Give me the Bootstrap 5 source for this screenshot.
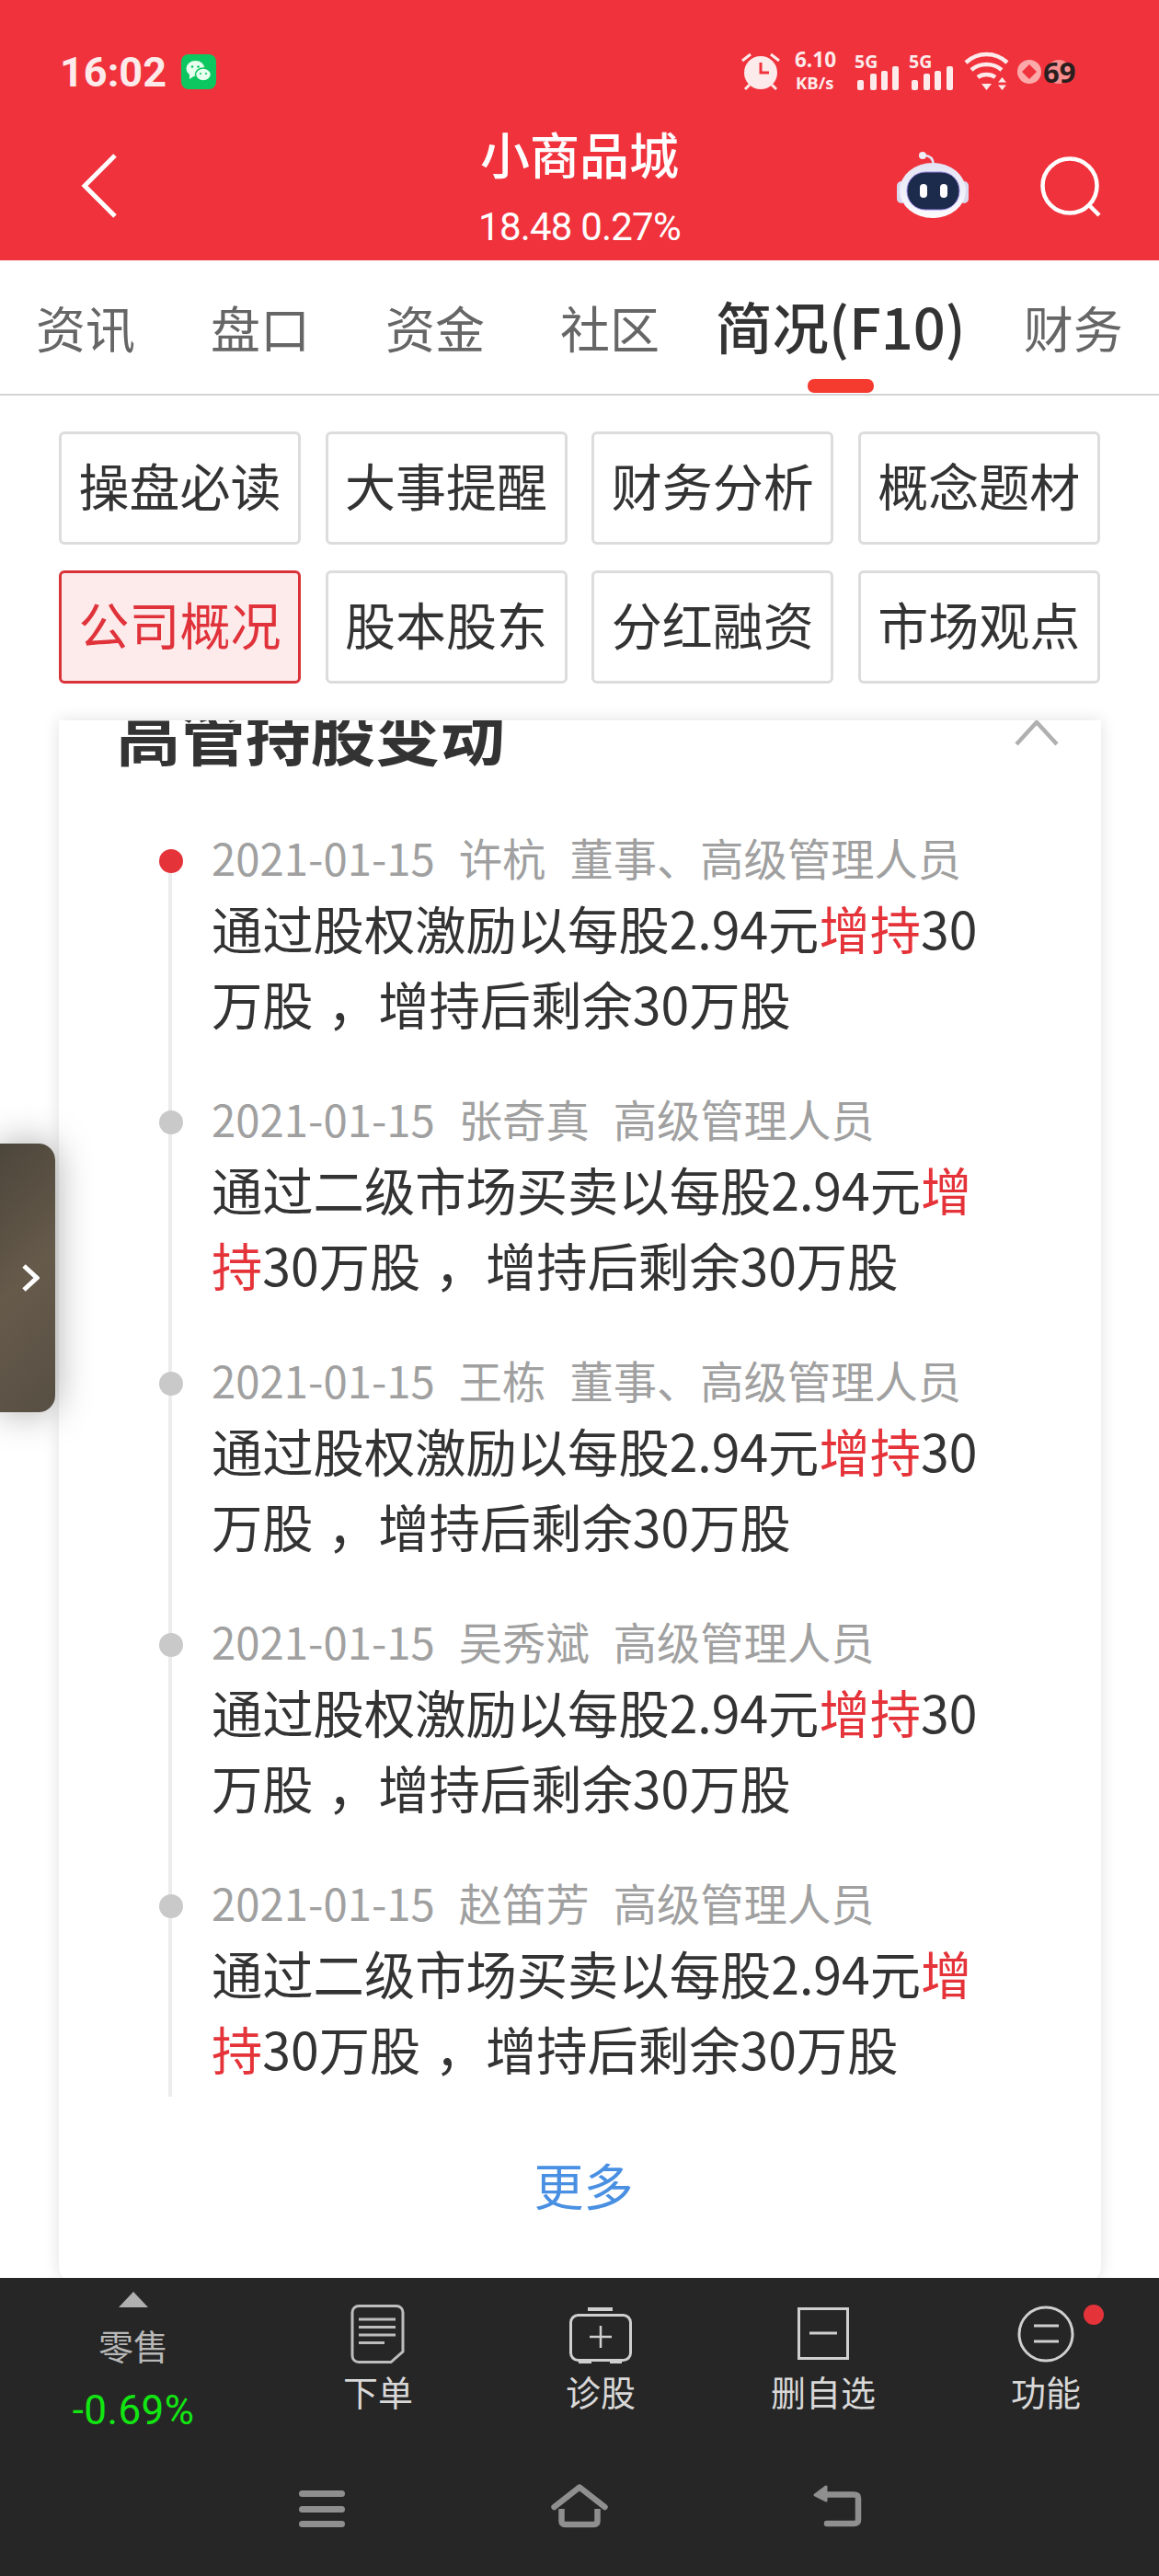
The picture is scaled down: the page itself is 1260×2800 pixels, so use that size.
<!DOCTYPE html>
<html lang="zh">
<head>
  <meta charset="UTF-8">
  <meta name="viewport" content="width=device-width, initial-scale=1.0">
  <title>小商品城</title>
  <link href="https://cdn.jsdelivr.net/npm/bootstrap@5.3.2/dist/css/bootstrap.min.css" rel="stylesheet">
  <style>
    body {
      font-family: "Noto Sans CJK SC", "Noto Sans", sans-serif;
      background: #fff;
      color: #333;
      overflow: hidden;
    }
    .phone { width: 1260px; height: 2800px; position: relative; overflow: hidden; }

    /* red header */
    .top-red { background: #f0323c; height: 283px; color: #fff; flex: none; position: relative; }
    .stat-bar { height: 124px; padding: 32px 80px 0 65px; }
    .clock-txt { font-family: Roboto, sans-serif; font-size: 45px; font-weight: 700; line-height: 1; color: #fdeaea; }
    .wx-badge { width: 38px; height: 38px; border-radius: 8px; background: #0cc760; margin-left: 16px; }
    .title-bar { height: 159px; padding: 0 63px 0 88px; }
    .title-mid { position: absolute; left: 0; right: 0; top: 124px; text-align: center; }
    .title-name { font-size: 54px; font-weight: 500; line-height: 78px; margin-top: 4px; }
    .title-price { font-family: Roboto, sans-serif; font-size: 42px; letter-spacing: -.8px; line-height: 50px; margin-top: 16px; }
    .back-ico { margin-top: 43px; }
    .robot-ico { margin-top: 41px; margin-right: 78px; }
    .find-ico { margin-top: 46px; }

    /* tabs */
    .tab-row { height: 147px; border-bottom: 2px solid #d4d4d4; padding: 0 0 0 39px; gap: 82px; position: relative; flex: none; }
    .tab-one { font-size: 54px; color: #666; line-height: 1; padding-top: 46px; white-space: nowrap; }
    .tab-on { font-size: 61.5px; color: #333; font-weight: 500; padding-top: 40px; margin-left: -21px; }
    .tab-end { margin-left: -19px; }
    .tab-mark { position: absolute; left: 878px; bottom: 1px; width: 72px; height: 15px; border-radius: 7px; background: #f53a30; }

    /* sub buttons */
    .btn-zone { padding: 39px 0 0 64px; display: grid; grid-template-columns: repeat(4, 263px); column-gap: 26.6px; row-gap: 28px; align-content: start; height: 353px; flex: none; background: #fff; }
    .sub-btn { height: 123px; border: 3px solid #dcdcdc; border-radius: 6px; font-size: 55px; color: #333; display: flex; align-items: center; justify-content: center; background: #fff; line-height: 1; padding-bottom: 9px; }
    .sub-on { background: #fdeaea; border-color: #d9333a; color: #e0323a; }

    /* card, scrolled under the buttons */
    .main-card { position: absolute; top: 783px; left: 64px; width: 1133px; height: 1697px; background: #fff; border-radius: 0 0 16px 16px; box-shadow: 0 0 18px rgba(0,0,0,.12); overflow: hidden; }
    .card-head { position: absolute; left: 62px; top: -22px; font-size: 70.5px; font-weight: 700; color: #333; line-height: 1; white-space: nowrap; }
    .card-fold { position: absolute; left: 1038px; top: 0; }
    .trade-list { position: absolute; left: 0; top: 121px; width: 100%; }
    .trade-item { position: relative; height: 284px; padding-left: 166px; }
    .trade-item::before { content: ""; position: absolute; left: 119px; top: 0; bottom: 0; width: 4px; background: #ececec; }
    .trade-item:first-child::before { top: 32px; }
    .trade-item:last-child::before { bottom: 45px; }
    .trade-dot { position: absolute; left: 109px; top: 19px; width: 26px; height: 26px; border-radius: 50%; background: #c9c9c9; }
    .trade-first { background: #e5333a; }
    .trade-meta { font-size: 47.3px; color: #a0a0a0; line-height: 56px; white-space: nowrap; }
    .trade-meta span + span { margin-left: 26px; }
    .trade-text { font-size: 55.3px; line-height: 82px; word-spacing: 3px; color: #333; width: 870px; margin-top: 7px; }
    .trade-text em { font-style: normal; color: #e5333a; }
    .more-link { position: absolute; top: 1565px; left: 0; width: 100%; padding-left: 8px; text-align: center; color: #4a90e2; font-size: 54px; line-height: 1; }

    .side-tab { position: absolute; left: 0; top: 1243px; width: 60px; height: 292px; padding-right: 17px; border-radius: 0 18px 18px 0; background: linear-gradient(135deg, #4c463a, #665a4b 50%, #574f43); box-shadow: 0 0 40px rgba(0,0,0,.35); z-index: 3; }

    /* dark bottom */
    .dark-bar { position: absolute; left: 0; top: 2476px; width: 100%; height: 324px; background: #262626; z-index: 4; }
    .dock-row { height: 224px; }
    .dock-cell { width: 242px; padding-top: 28px; position: relative; color: #d8d8d8; }
    .dock-first { width: 290px; padding-top: 15px; color: #b8b8b8; }
    .dock-lbl { font-size: 38px; line-height: 38px; margin-top: 10px; white-space: nowrap; }
    .dock-first .dock-lbl { margin-top: 22px; }
    .dock-pct { font-family: Roboto, sans-serif; font-size: 44px; letter-spacing: .4px; color: #12e612; line-height: 42px; margin-top: 31px; }
    .dock-dot { position: absolute; left: 162px; top: 29px; width: 22px; height: 22px; border-radius: 50%; background: #e5333a; }
    .nav-keys { gap: 218px; }
  </style>
</head>
<body>
<div class="phone d-flex flex-column">
  <div class="top-red">
    <div class="stat-bar d-flex align-items-center justify-content-between">
      <div class="d-flex align-items-center">
        <span class="clock-txt">16:02</span>
        <span class="wx-badge d-flex align-items-center justify-content-center">
          <svg width="30" height="26" viewBox="0 0 30 26">
            <ellipse cx="11.5" cy="9.5" rx="10" ry="8.5" fill="#e8fff0"/>
            <path d="M5 15l0 6 6-4z" fill="#e8fff0"/>
            <ellipse cx="20" cy="16" rx="8.5" ry="7" fill="#e8fff0" stroke="#0cc760" stroke-width="1.5"/>
            <circle cx="8" cy="7.5" r="1.3" fill="#0cc760"/><circle cx="14.5" cy="7.5" r="1.3" fill="#0cc760"/>
            <circle cx="17" cy="15" r="1.1" fill="#0cc760"/><circle cx="23" cy="15" r="1.1" fill="#0cc760"/>
          </svg>
        </span>
      </div>
      <svg width="380" height="50" viewBox="800 53 380 50" font-family="'Open Sans', sans-serif" font-weight="700" fill="#fdeaea">
        <circle cx="827" cy="79" r="18"/>
        <path d="M827 68v11h9" fill="none" stroke="#f0323c" stroke-width="3"/>
        <path d="M807 66l9-7M847 66l-9-7M810 97l5-5M844 97l-5-5" fill="none" stroke="#fdeaea" stroke-width="3"/>
        <text x="864" y="73" font-size="22.5">6.10</text>
        <text x="865" y="97" font-size="18.5">KB/s</text>
        <text x="929" y="74" font-size="19.5">5G</text>
        <rect x="932" y="87" width="7" height="11" rx="2"/><rect x="946" y="80" width="7" height="18" rx="2"/><rect x="958" y="77" width="7" height="21" rx="2"/><rect x="970" y="72" width="7" height="26" rx="2"/>
        <text x="988" y="74" font-size="19.5">5G</text>
        <rect x="991" y="87" width="7" height="11" rx="2"/><rect x="1004" y="80" width="7" height="18" rx="2"/><rect x="1016" y="77" width="7" height="21" rx="2"/><rect x="1029" y="72" width="7" height="26" rx="2"/>
        <g fill="none" stroke="#fdeaea" stroke-width="4.5">
          <path d="M1050 68c13-12 32-12 45 0"/>
          <path d="M1056 76c9-8 24-8 33 0"/>
          <path d="M1063 84c5-4 14-4 19 0"/>
        </g>
        <path d="M1067 91h11l-5.500 7z"/>
        <path d="M1089.500 84l4.500 5.500h-9zM1089.500 98l4.500-5.500h-9z"/>
        <circle cx="1119" cy="78" r="13" fill="#fca9a9"/>
        <path d="M1119 70l8 8-8 8-8-8z" fill="#f0323c"/>
        <circle cx="1151" cy="78" r="13" fill="#fa8f8f"/>
        <text x="1134" y="90" font-size="31" fill="#2a1e1e">69</text>
      </svg>
    </div>
    <div class="title-bar d-flex align-items-start">
      <svg class="back-ico" width="40" height="70" viewBox="0 0 40 70" fill="none" stroke="#fff" stroke-width="5"><path d="M37 2L4 35l33 33"/></svg>
      <div class="title-mid">
        <div class="title-name">小商品城</div>
        <div class="title-price">18.48 0.27%</div>
      </div>
      <svg class="robot-ico ms-auto" width="78" height="72" viewBox="0 0 78 72">
        <defs>
          <linearGradient id="robotHead" x1="0" y1="0" x2="0" y2="1"><stop offset="0" stop-color="#e4e3f3"/><stop offset="1" stop-color="#fbfbff"/></linearGradient>
        </defs>
        <path d="M30 4q9 0 10 10" fill="none" stroke="#e4e3f3" stroke-width="2.500"/>
        <circle cx="28" cy="4" r="4" fill="#eeeef8"/>
        <rect x="0" y="32" width="10" height="24" rx="5" fill="#d9d9ee"/>
        <rect x="68" y="32" width="10" height="24" rx="5" fill="#d9d9ee"/>
        <ellipse cx="39" cy="42" rx="36" ry="30" fill="url(#robotHead)"/>
        <rect x="11" y="22" width="57" height="41" rx="20" fill="#1c2a4b" stroke="#9a86e0" stroke-width="1"/>
        <rect x="25" y="35" width="8" height="15" rx="4" fill="#fff"/>
        <rect x="47" y="35" width="8" height="15" rx="4" fill="#fff"/>
      </svg>
      <svg class="find-ico" width="66" height="66" viewBox="0 0 66 66" fill="none" stroke="#fff" stroke-width="4.500"><circle cx="32" cy="32" r="29.500"/><path d="M54 54l10 10"/></svg>
    </div>
  </div>

  <div class="tab-row d-flex">
    <div class="tab-one">资讯</div>
    <div class="tab-one">盘口</div>
    <div class="tab-one">资金</div>
    <div class="tab-one">社区</div>
    <div class="tab-one tab-on">简况(F10)</div>
    <div class="tab-one tab-end">财务</div>
    <div class="tab-mark"></div>
  </div>

  <div class="btn-zone">
    <div class="sub-btn">操盘必读</div>
    <div class="sub-btn">大事提醒</div>
    <div class="sub-btn">财务分析</div>
    <div class="sub-btn">概念题材</div>
    <div class="sub-btn sub-on">公司概况</div>
    <div class="sub-btn">股本股东</div>
    <div class="sub-btn">分红融资</div>
    <div class="sub-btn">市场观点</div>
  </div>

  <div class="main-card">
    <div class="card-head">高管持股变动</div>
    <svg class="card-fold" width="50" height="28" viewBox="0 0 50 28" fill="none" stroke="#b0b0b0" stroke-width="4.500"><path d="M3 26L25 2l22 24"/></svg>
    <div class="trade-list">
      <div class="trade-item">
        <div class="trade-dot trade-first"></div>
        <div class="trade-meta"><span>2021-01-15</span><span>许杭</span><span>董事、高级管理人员</span></div>
        <div class="trade-text">通过股权激励以每股2.94元<em>增持</em>30万股 ，增持后剩余30万股</div>
      </div>
      <div class="trade-item">
        <div class="trade-dot"></div>
        <div class="trade-meta"><span>2021-01-15</span><span>张奇真</span><span>高级管理人员</span></div>
        <div class="trade-text">通过二级市场买卖以每股2.94元<em>增持</em>30万股 ，增持后剩余30万股</div>
      </div>
      <div class="trade-item">
        <div class="trade-dot"></div>
        <div class="trade-meta"><span>2021-01-15</span><span>王栋</span><span>董事、高级管理人员</span></div>
        <div class="trade-text">通过股权激励以每股2.94元<em>增持</em>30万股 ，增持后剩余30万股</div>
      </div>
      <div class="trade-item">
        <div class="trade-dot"></div>
        <div class="trade-meta"><span>2021-01-15</span><span>吴秀斌</span><span>高级管理人员</span></div>
        <div class="trade-text">通过股权激励以每股2.94元<em>增持</em>30万股 ，增持后剩余30万股</div>
      </div>
      <div class="trade-item">
        <div class="trade-dot"></div>
        <div class="trade-meta"><span>2021-01-15</span><span>赵笛芳</span><span>高级管理人员</span></div>
        <div class="trade-text">通过二级市场买卖以每股2.94元<em>增持</em>30万股 ，增持后剩余30万股</div>
      </div>
    </div>
    <div class="more-link">更多</div>
  </div>

  <div class="side-tab d-flex align-items-center justify-content-end">
    <svg width="20" height="32" viewBox="0 0 20 32" fill="none" stroke="#fff" stroke-width="5"><path d="M3 3l14 13L3 29"/></svg>
  </div>

  <div class="dark-bar">
    <div class="dock-row d-flex">
      <div class="dock-cell dock-first d-flex flex-column align-items-center">
        <svg width="32" height="17" viewBox="0 0 32 17"><path d="M16 0l16 17H0z" fill="#b0b0b0"/></svg>
        <div class="dock-lbl">零售</div>
        <div class="dock-pct">-0.69%</div>
      </div>
      <div class="dock-cell d-flex flex-column align-items-center">
        <svg width="60" height="66" viewBox="0 0 60 66" fill="none" stroke="#bdbdbd" stroke-width="3">
          <path d="M9 2.500H50a7 7 0 0 1 7 7V52L44 63.500H9a7 7 0 0 1-7-7V9.500a7 7 0 0 1 7-7z"/>
          <path d="M9 17h40M9 25.500h40M9 34h40M9 42.500h28"/>
        </svg>
        <div class="dock-lbl">下单</div>
      </div>
      <div class="dock-cell d-flex flex-column align-items-center">
        <svg width="70" height="66" viewBox="0 0 70 66" fill="#cfcfcf" stroke="none">
          <rect x="21" y="4" width="27" height="4"/>
          <rect x="11" y="60" width="14" height="5"/>
          <rect x="45" y="60" width="13" height="5"/>
          <rect x="2.500" y="12.500" width="65" height="49" rx="8" fill="none" stroke="#cfcfcf" stroke-width="3"/>
          <path d="M23 36h24M35 24v24" fill="none" stroke="#cfcfcf" stroke-width="2.500"/>
        </svg>
        <div class="dock-lbl">诊股</div>
      </div>
      <div class="dock-cell d-flex flex-column align-items-center">
        <svg width="60" height="66" viewBox="0 0 60 66" fill="none" stroke="#cfcfcf" stroke-width="3">
          <rect x="3.500" y="5.500" width="53" height="54"/>
          <path d="M15 32h30"/>
        </svg>
        <div class="dock-lbl">删自选</div>
      </div>
      <div class="dock-cell d-flex flex-column align-items-center">
        <svg width="66" height="66" viewBox="0 0 66 66" fill="none" stroke="#cfcfcf" stroke-width="3">
          <circle cx="33" cy="33" r="29"/>
          <path d="M20 24h27M20 41h27"/>
        </svg>
        <div class="dock-lbl">功能</div>
        <div class="dock-dot"></div>
      </div>
    </div>
    <div class="nav-keys d-flex justify-content-center">
      <svg width="62" height="48" viewBox="0 0 62 48" fill="#8f8f8f"><rect x="6" y="7" width="50" height="7" rx="3.500"/><rect x="6" y="24" width="50" height="7" rx="3.500"/><rect x="6" y="40" width="50" height="7" rx="3.500"/></svg>
      <svg width="62" height="48" viewBox="0 0 62 48" fill="none" stroke="#8f8f8f" stroke-width="6.500" stroke-linecap="round" stroke-linejoin="round"><path d="M3.500 25L31 3.500 58.500 25"/><path d="M11.500 27V40q0 4 4 4h31q4 0 4-4V27" stroke-linecap="butt"/></svg>
      <svg width="62" height="48" viewBox="0 0 62 48" fill="none" stroke="#8f8f8f" stroke-width="6.500" stroke-linecap="round"><path d="M20 11.500h29q5 0 5 4V39q0 4-5 4H20"/><path d="M7 12l12-9v15z" fill="#8f8f8f" stroke-width="3" stroke-linejoin="round"/></svg>
    </div>
  </div>
</div>
<script src="https://cdn.jsdelivr.net/npm/bootstrap@5.3.2/dist/js/bootstrap.bundle.min.js"></script>
</body>
</html>
